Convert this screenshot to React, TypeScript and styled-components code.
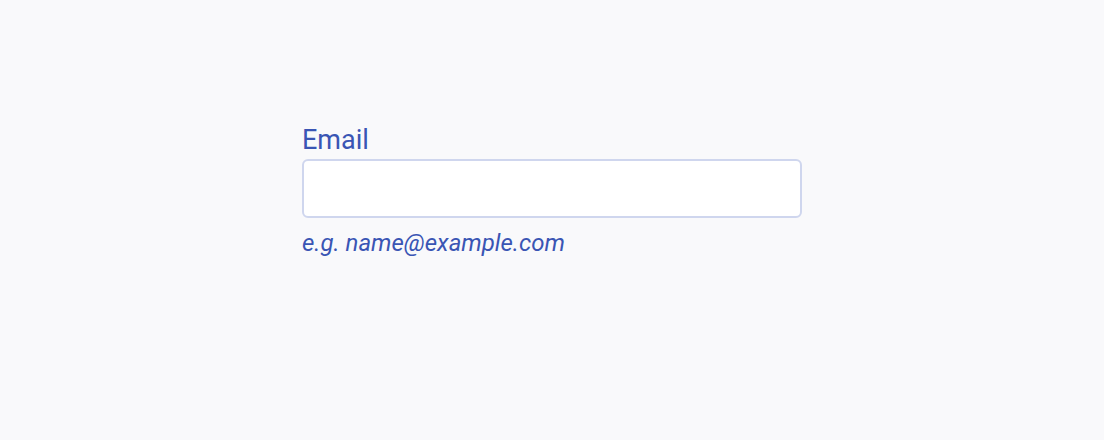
import React from 'react';
import styled, { createGlobalStyle } from 'styled-components';

const GlobalStyle = createGlobalStyle`
  html, body {
    margin: 0;
    padding: 0;
    background: #f9f9fb;
    font-family: Roboto, "Liberation Sans", sans-serif;
  }
`;

const Page = styled.main`
  min-height: 440px;
  box-sizing: border-box;
  padding-top: 124px;
  display: flex;
  justify-content: center;
`;

const Field = styled.div`
  width: 500px;
  display: flex;
  flex-direction: column;
`;

const Label = styled.label`
  font-size: 27px;
  line-height: 32px;
  color: #3a55b4;
  margin-bottom: 3px;
`;

const Input = styled.input`
  box-sizing: border-box;
  width: 100%;
  height: 59px;
  border: 2px solid #cfd6ee;
  border-radius: 6px;
  background: #ffffff;
  padding: 0 14px;
  font: inherit;
  font-size: 20px;
  outline: none;
`;

const Hint = styled.span`
  margin-top: 11px;
  font-size: 24px;
  line-height: 28px;
  font-style: italic;
  color: #3a55b4;
`;

const App = () => {
  return (
    <>
      <GlobalStyle />
      <Page>
        <Field>
          <Label htmlFor="email">Email</Label>
          <Input id="email" type="email" />
          <Hint>e.g. name@example.com</Hint>
        </Field>
      </Page>
    </>
  );
};

export default App;
